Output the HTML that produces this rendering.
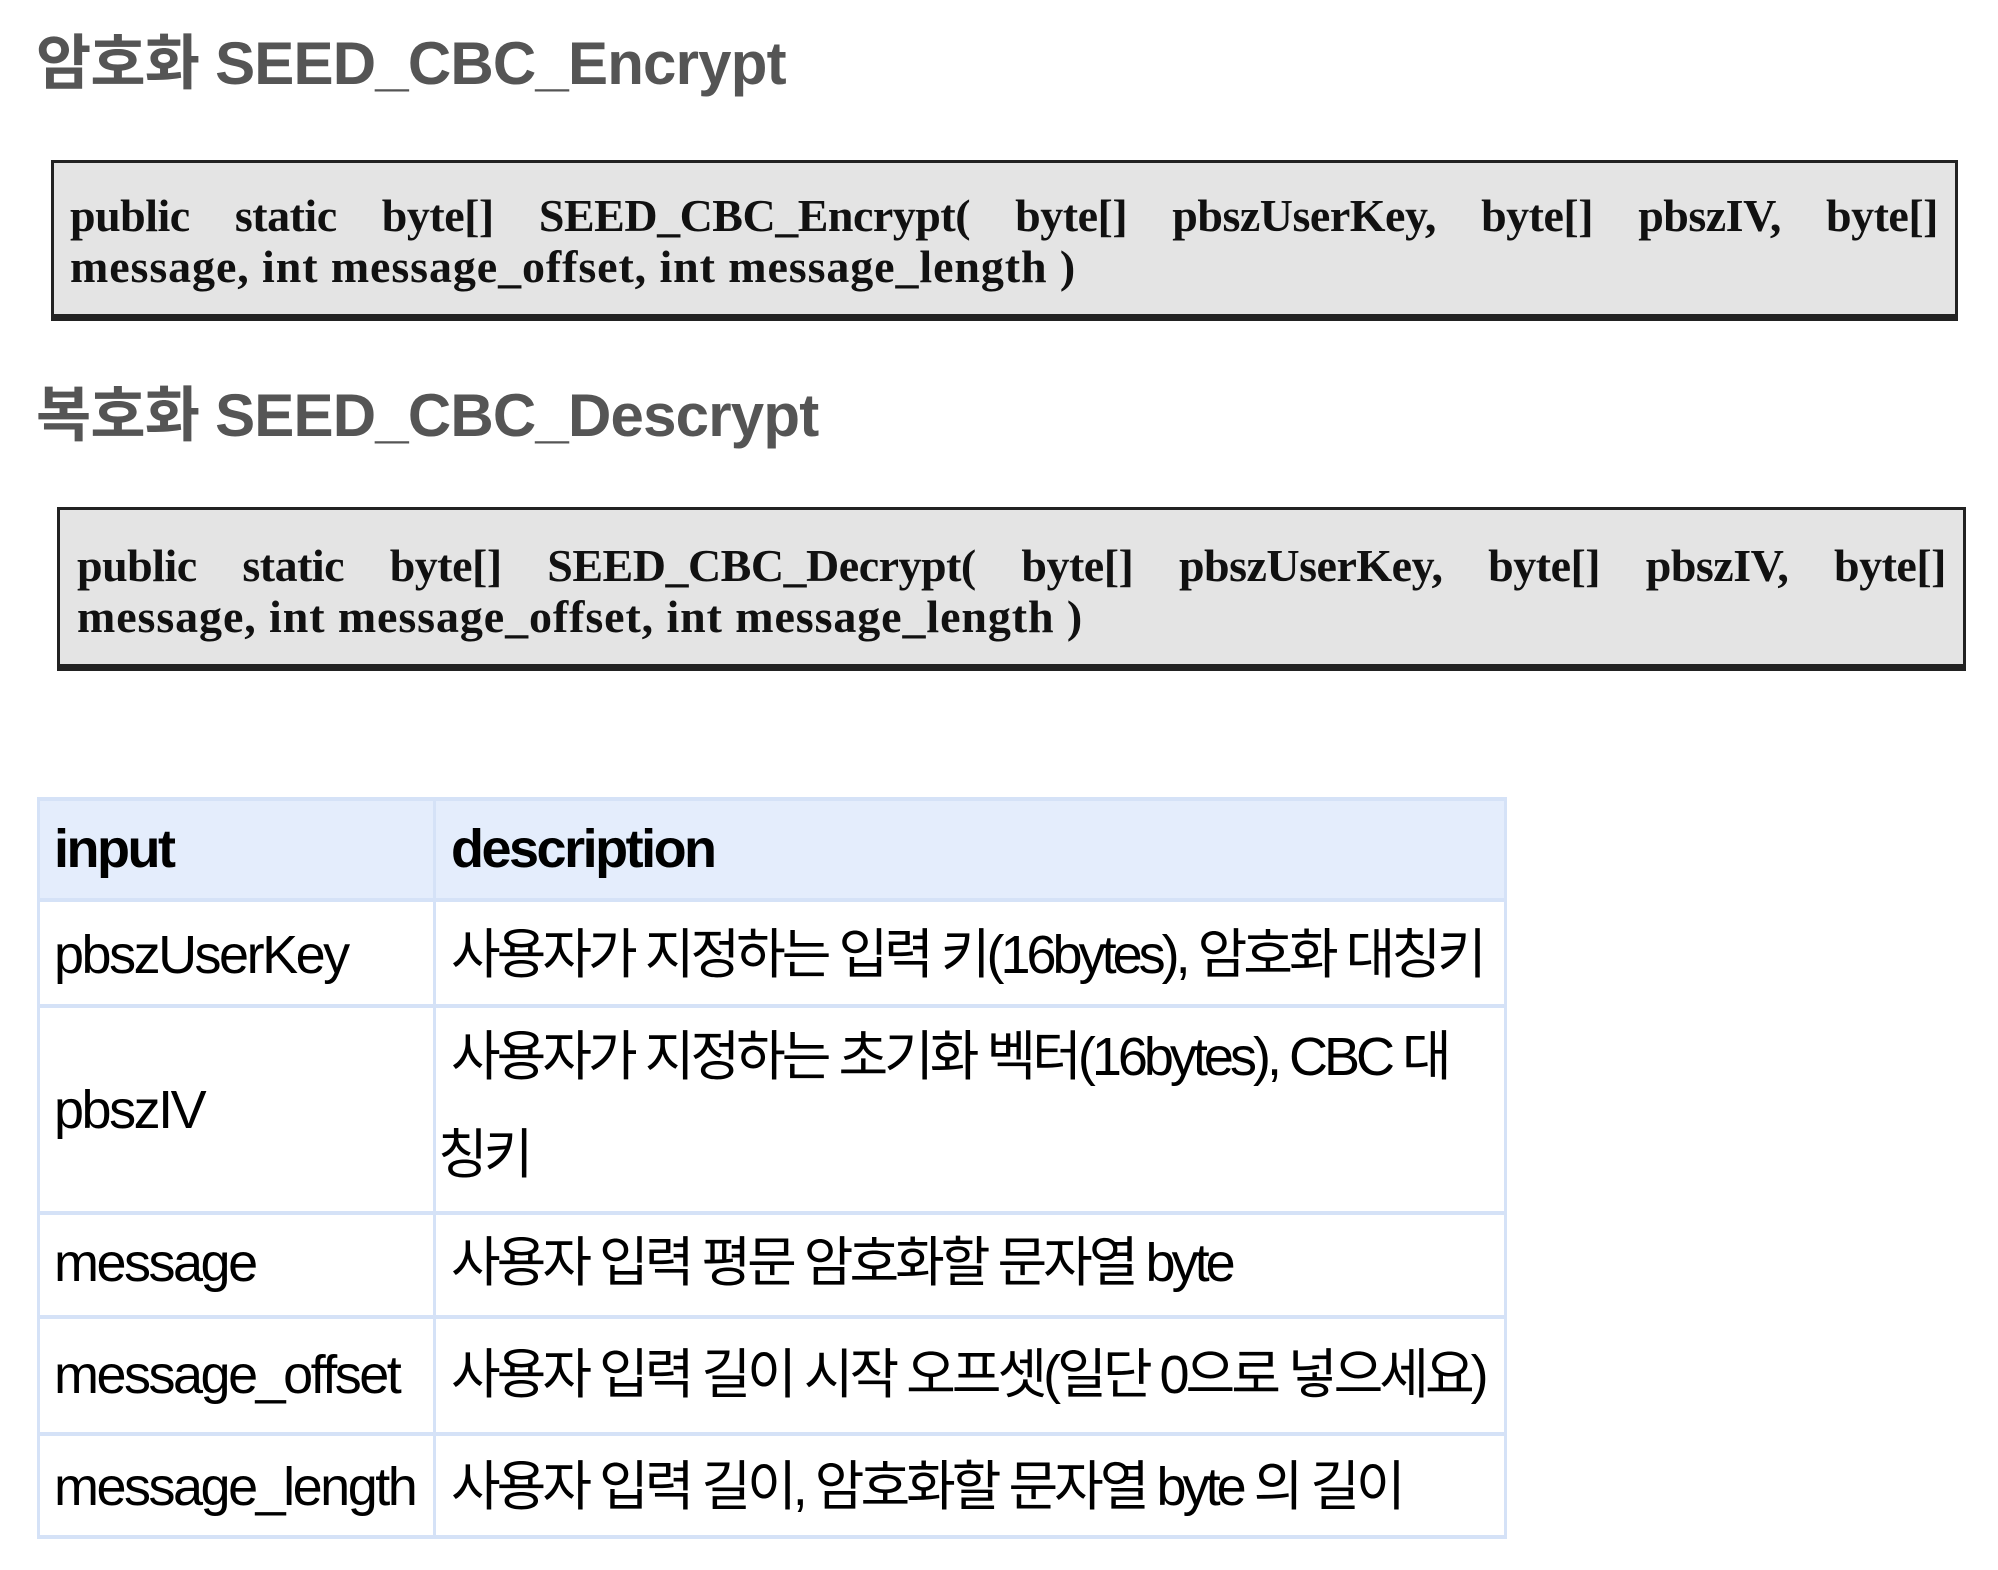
<!DOCTYPE html>
<html><head><meta charset="utf-8"><style>
html,body{margin:0;padding:0;background:#fff;width:1998px;height:1570px;overflow:hidden;position:relative}
.a{position:absolute;white-space:nowrap;line-height:1}
.h{font-family:"Liberation Sans","Noto Sans CJK KR",sans-serif;font-weight:bold;font-size:60px;color:#555;letter-spacing:-0.8px}
.box{position:absolute;background:#e4e4e4;border:3px solid #222;border-bottom-width:7px;box-sizing:border-box}
.c{font-family:"Liberation Serif","Noto Serif CJK SC",serif;font-weight:bold;font-size:46px;color:#111;letter-spacing:0.9px}
.l1{text-align:justify;text-align-last:justify;white-space:normal;letter-spacing:-0.5px}
.t{font-family:"Liberation Sans","Noto Sans CJK KR",sans-serif;font-size:54px;color:#000;letter-spacing:-2.5px}
.k{letter-spacing:-4px}
.hl{position:absolute;background:#d5e2f7}
</style></head><body>
<div class="a h" style="left:36px;top:34px">암호화 SEED_CBC_Encrypt</div>
<div class="box" style="left:51px;top:160px;width:1907px;height:161px"></div>
<div class="a c l1" style="left:70px;top:193px;width:1868px">public static byte[] SEED_CBC_Encrypt( byte[] pbszUserKey, byte[] pbszIV, byte[]</div>
<div class="a c" style="left:70px;top:244px">message, int message_offset, int message_length )</div>

<div class="a h" style="left:36px;top:386px">복호화 SEED_CBC_Descrypt</div>
<div class="box" style="left:57px;top:507px;width:1909px;height:164px"></div>
<div class="a c l1" style="left:77px;top:543px;width:1869px">public static byte[] SEED_CBC_Decrypt( byte[] pbszUserKey, byte[] pbszIV, byte[]</div>
<div class="a c" style="left:77px;top:594px">message, int message_offset, int message_length )</div>

<div style="position:absolute;left:38px;top:798px;width:1467px;height:101px;background:#e4edfc"></div>
<div class="hl" style="left:37px;top:797px;width:1470px;height:4px"></div>
<div class="hl" style="left:37px;top:898px;width:1470px;height:4px"></div>
<div class="hl" style="left:37px;top:1004px;width:1470px;height:4px"></div>
<div class="hl" style="left:37px;top:1211px;width:1470px;height:4px"></div>
<div class="hl" style="left:37px;top:1315px;width:1470px;height:4px"></div>
<div class="hl" style="left:37px;top:1432px;width:1470px;height:4px"></div>
<div class="hl" style="left:37px;top:1535px;width:1470px;height:4px"></div>
<div class="hl" style="left:37px;top:797px;width:3px;height:742px"></div>
<div class="hl" style="left:433px;top:797px;width:3px;height:742px"></div>
<div class="hl" style="left:1504px;top:797px;width:3px;height:742px"></div>

<div class="a t" style="left:54px;top:822px;font-weight:bold">input</div>
<div class="a t" style="left:451px;top:822px;font-weight:bold">description</div>
<div class="a t" style="left:54px;top:928px">pbszUserKey</div>
<div class="a t k" style="left:451px;top:928px">사용자가 지정하는 입력 키(16bytes), 암호화 대칭키</div>
<div class="a t" style="left:54px;top:1083px">pbszIV</div>
<div class="a t k" style="left:451px;top:1030px">사용자가 지정하는 초기화 벡터(16bytes), CBC 대</div>
<div class="a t k" style="left:438px;top:1128px">칭키</div>
<div class="a t" style="left:54px;top:1236px">message</div>
<div class="a t k" style="left:451px;top:1236px">사용자 입력 평문 암호화할 문자열 byte</div>
<div class="a t" style="left:54px;top:1348px">message_offset</div>
<div class="a t k" style="left:451px;top:1348px">사용자 입력 길이 시작 오프셋(일단 0으로 넣으세요)</div>
<div class="a t" style="left:54px;top:1460px">message_length</div>
<div class="a t k" style="left:451px;top:1460px">사용자 입력 길이, 암호화할 문자열 byte 의 길이</div>
</body></html>
